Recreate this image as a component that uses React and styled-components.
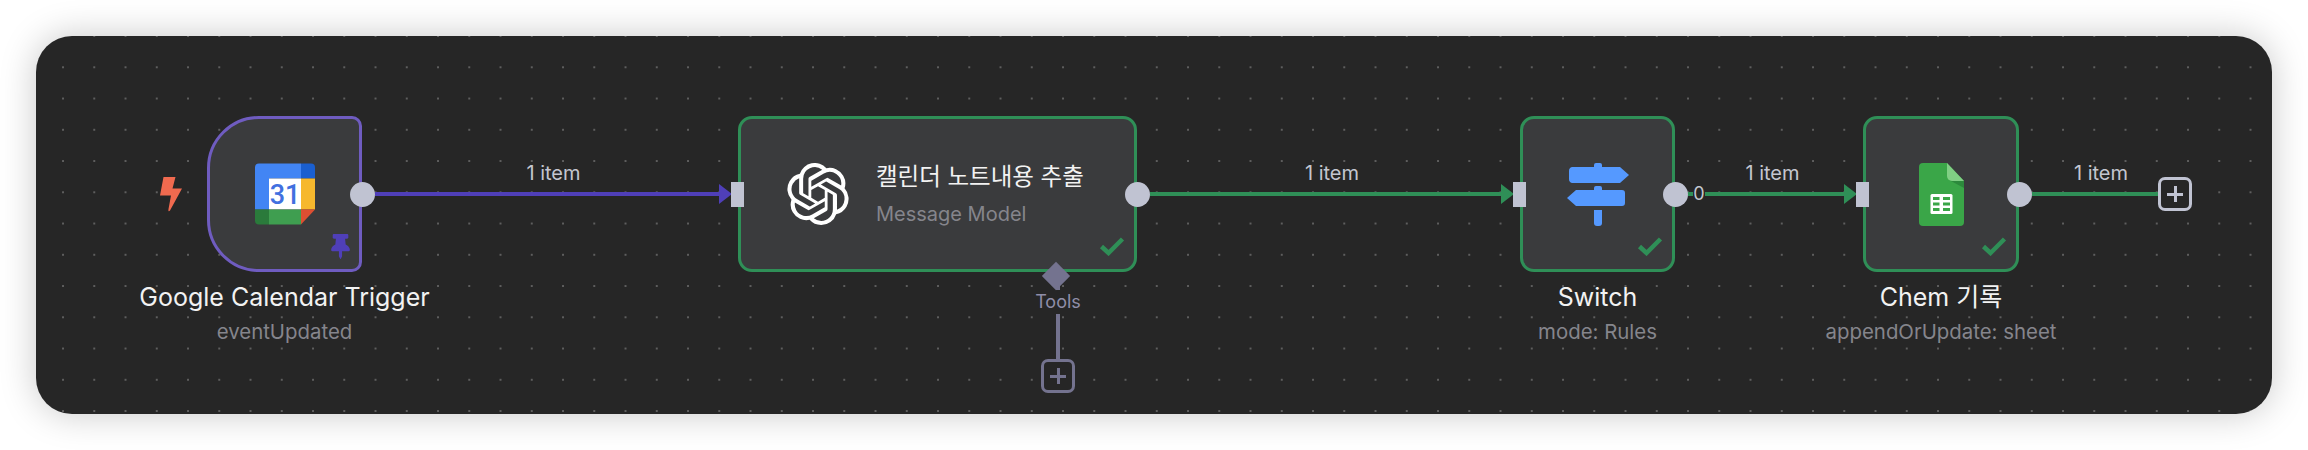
import React from 'react';
import styled, { createGlobalStyle } from 'styled-components';
import { SiOpenai } from 'react-icons/si';
import { FaThumbtack } from 'react-icons/fa';

const PURPLE = '#4f3fb8';
const GREEN = '#2f8f57';
const PORT = '#c0c3d2';
const TOOL = '#74738f';

const CalendarIcon = () => (
  <svg width="60" height="62" viewBox="0 0 60 61">
    <path d="M4 0H46V15H14V46H0V4A4 4 0 0 1 4 0Z" fill="#4285f4" />
    <path d="M46 0H56A4 4 0 0 1 60 4V15H46Z" fill="#1a5fd0" />
    <rect x="46" y="15" width="14" height="31" fill="#f6b82e" />
    <rect x="14" y="15" width="32" height="31" fill="#fff" />
    <rect x="14" y="46" width="32" height="15" fill="#3f9e50" />
    <path d="M0 46H14V61H4A4 4 0 0 1 0 57Z" fill="#2a7a3b" />
    <path d="M46 46H60L46 61Z" fill="#dd4f32" />
    <text x="30" y="40.500" textAnchor="middle" fontFamily="Roboto, sans-serif" fontWeight="500" fontSize="27" fill="#4170e0">31</text>
  </svg>
);

const SwitchIcon = () => (
  <svg width="62" height="63" viewBox="0 0 62 63" fill="#5599ff">
    <path d="M27 4V2A2 2 0 0 1 29 0H33A2 2 0 0 1 35 2V4H53L62 12L53 20H5A4 4 0 0 1 2 16V8A4 4 0 0 1 5 4Z" />
    <path d="M27 27V25A2 2 0 0 1 29 23H33A2 2 0 0 1 35 25V27H55A3 3 0 0 1 58 30V40A3 3 0 0 1 55 43H9L0 35L9 27Z" />
    <path d="M27 47H35V60A3 3 0 0 1 32 63H30A3 3 0 0 1 27 60Z" />
  </svg>
);

const SheetsIcon = () => (
  <svg width="45" height="63" viewBox="0 0 45 63">
    <path d="M4 0H28L45 18V59A4 4 0 0 1 41 63H4A4 4 0 0 1 0 59V4A4 4 0 0 1 4 0Z" fill="#3aa648" />
    <path d="M28 0L45 18H33A5 5 0 0 1 28 13Z" fill="#80cf84" />
    <path d="M32 18H45V25Z" fill="#2c8a3c" />
    <rect x="11.500" y="31" width="22" height="20" rx="1.500" fill="#fff" />
    <path d="M14 35.500H20.500M24 35.500H31M14 41H20.500M24 41H31M14 46.500H20.500M24 46.500H31" stroke="#3aa648" strokeWidth="3" />
  </svg>
);

const Check = () => (
  <svg width="26" height="19" viewBox="0 0 26 19">
    <path d="M2.500 9.500L9.500 16L23.500 2" fill="none" stroke={GREEN} strokeWidth="4.500" />
  </svg>
);

const Bolt = () => (
  <svg width="22" height="35" viewBox="0 0 22 35">
    <path d="M3.500 0H15.500L12.500 11.500H22L10 33.500Q8 35.500 8.500 32L11 18.500H0Z" fill="#f06a4f" />
  </svg>
);

const App = () => {
  return (
    <Page>
      <GlobalStyle />
      <Canvas>
        <BoltSlot><Bolt /></BoltSlot>

        <Node $w={155}>
          <Box $trigger>
            <CalendarIcon />
            <PinMark><FaThumbtack size={25} color={PURPLE} /></PinMark>
            <OutPort />
          </Box>
          <Title>Google Calendar Trigger</Title>
          <Sub>eventUpdated</Sub>
        </Node>

        <Edge $w={376}>
          <EdgeLabel>1 item</EdgeLabel>
          <Track>
            <Line $color={PURPLE} />
            <Arrow $color={PURPLE} />
          </Track>
        </Edge>

        <Node $w={399}>
          <WideBox>
            <SiOpenai size={62} color="#fff" />
            <WideText>
              <WideTitle>캘린더 노트내용 추출</WideTitle>
              <WideSub>Message Model</WideSub>
            </WideText>
            <InPort />
            <OutPort />
            <CheckMark><Check /></CheckMark>
            <Diamond />
          </WideBox>
          <Branch>
            <Stem $h={18} />
            <ToolsLabel>Tools</ToolsLabel>
            <Stem $h={45} />
            <PlusButton $color={TOOL} />
          </Branch>
        </Node>

        <Edge $w={383}>
          <EdgeLabel>1 item</EdgeLabel>
          <Track>
            <Line $color={GREEN} />
            <Arrow $color={GREEN} />
          </Track>
        </Edge>

        <Node $w={155}>
          <Box>
            <SwitchIcon />
            <InPort />
            <OutPort />
            <CheckMark><Check /></CheckMark>
          </Box>
          <Title>Switch</Title>
          <Sub>mode: Rules</Sub>
        </Node>

        <Edge $w={188}>
          <EdgeLabel>1 item</EdgeLabel>
          <Track>
            <Line $color={GREEN} $w={5} />
            <Zero>0</Zero>
            <Line $color={GREEN} />
            <Arrow $color={GREEN} />
          </Track>
        </Edge>

        <Node $w={156}>
          <Box>
            <SheetsIcon />
            <InPort />
            <OutPort />
            <CheckMark><Check /></CheckMark>
          </Box>
          <Title>Chem 기록</Title>
          <Sub>appendOrUpdate: sheet</Sub>
        </Node>

        <Edge $w={139} $open>
          <EdgeLabel $shift={12}>1 item</EdgeLabel>
          <Track>
            <Line $color={GREEN} />
          </Track>
        </Edge>

        <PlusSlot>
          <PlusButton $color={PORT} />
        </PlusSlot>
      </Canvas>
    </Page>
  );
};

export default App;

const GlobalStyle = createGlobalStyle`
  html, body {
    margin: 0;
    padding: 0;
    background: #fff;
    font-family: Inter, "Noto Sans CJK KR", sans-serif;
  }
`;
const Page = styled.div`
  width: 2308px;
  height: 450px;
  padding: 36px;
  box-sizing: border-box;
  overflow: hidden;
`;
const Canvas = styled.div`
  width: 2236px;
  height: 378px;
  box-sizing: border-box;
  padding: 80px 0 0 124px;
  display: flex;
  align-items: flex-start;
  border-radius: 36px;
  background-color: #262626;
  background-image: radial-gradient(circle, #5e5e5e 1px, transparent 1.4px);
  background-size: 31.25px 31.25px;
  background-position: 11.4px -15.6px;
  box-shadow: 0 0 36px rgba(0, 0, 0, 0.22);
`;
const BoltSlot = styled.div`
  flex: none;
  height: 156px;
  margin-right: 25px;
  display: flex;
  align-items: center;
`;
const PlusSlot = styled.div`
  flex: none;
  height: 156px;
  display: flex;
  align-items: center;
`;
const Node = styled.div`
  flex: none;
  width: ${(p) => p.$w}px;
  display: flex;
  flex-direction: column;
  align-items: center;
`;
const Box = styled.div`
  position: relative;
  width: 100%;
  height: 156px;
  box-sizing: border-box;
  display: flex;
  align-items: center;
  justify-content: center;
  background: #3a3b3d;
  border: 3px solid ${(p) => (p.$trigger ? '#6f5cc0' : GREEN)};
  border-radius: ${(p) => (p.$trigger ? '52px 10px 10px 52px' : '14px')};
`;
const WideBox = styled(Box)`
  justify-content: flex-start;
  padding-left: 46px;
  gap: 27px;
`;
const WideText = styled.div`
  display: flex;
  flex-direction: column;
  gap: 7px;
`;
const WideTitle = styled.div`
  font-size: 23.5px;
  line-height: 32px;
  color: #f2f2f2;
  white-space: nowrap;
`;
const WideSub = styled.div`
  font-size: 20px;
  line-height: 28px;
  color: #85858c;
  white-space: nowrap;
`;
const Title = styled.div`
  margin-top: 11px;
  font-size: 25px;
  line-height: 28px;
  color: #f2f2f2;
  white-space: nowrap;
`;
const Sub = styled.div`
  margin-top: 9px;
  font-size: 20.4px;
  line-height: 24px;
  color: #85858c;
  white-space: nowrap;
`;
const OutPort = styled.span`
  position: absolute;
  right: -16px;
  top: 50%;
  width: 25px;
  height: 25px;
  margin-top: -12.5px;
  border-radius: 50%;
  background: ${PORT};
`;
const InPort = styled.span`
  position: absolute;
  left: -10px;
  top: 50%;
  width: 12.5px;
  height: 25px;
  margin-top: -12.5px;
  background: ${PORT};
`;
const CheckMark = styled.span`
  position: absolute;
  right: 9px;
  bottom: 13px;
  display: flex;
`;
const PinMark = styled.span`
  position: absolute;
  right: 6px;
  bottom: 10px;
  display: flex;
`;
const Diamond = styled.span`
  position: absolute;
  left: 305px;
  bottom: -17px;
  width: 20px;
  height: 20px;
  background: ${TOOL};
  transform: rotate(45deg);
`;
const Edge = styled.div`
  flex: none;
  width: ${(p) => p.$w}px;
  height: 156px;
  box-sizing: border-box;
  padding: 46px ${(p) => (p.$open ? 0 : 6)}px 0 13px;
  display: flex;
  flex-direction: column;
  align-items: stretch;
`;
const EdgeLabel = styled.div`
  padding-left: ${(p) => p.$shift || 0}px;
  font-size: 20px;
  line-height: 22px;
  text-align: center;
  color: #c4c6d0;
  white-space: nowrap;
`;
const Track = styled.div`
  height: 20px;
  display: flex;
  align-items: center;
`;
const Line = styled.div`
  flex: ${(p) => (p.$w ? `none` : 1)};
  width: ${(p) => (p.$w ? `${p.$w}px` : 'auto')};
  height: 4px;
  background: ${(p) => p.$color};
`;
const Arrow = styled.div`
  flex: none;
  width: 0;
  height: 0;
  border-left: 13px solid ${(p) => p.$color};
  border-top: 10px solid transparent;
  border-bottom: 10px solid transparent;
`;
const Zero = styled.span`
  flex: none;
  width: 12px;
  font-size: 18px;
  line-height: 20px;
  text-align: center;
  color: #c4c6d0;
`;
const Branch = styled.div`
  align-self: flex-end;
  width: 60px;
  margin-right: 49px;
  display: flex;
  flex-direction: column;
  align-items: center;
`;
const Stem = styled.div`
  width: 4px;
  height: ${(p) => p.$h}px;
  background: ${TOOL};
`;
const ToolsLabel = styled.div`
  font-size: 18px;
  line-height: 24px;
  color: #8f8ea8;
`;
const PlusButton = styled.div`
  flex: none;
  width: 34px;
  height: 34px;
  box-sizing: border-box;
  border: 3px solid ${(p) => p.$color};
  border-radius: 7px;
  background: linear-gradient(${(p) => p.$color}, ${(p) => p.$color}) center / 16px 3px no-repeat,
    linear-gradient(${(p) => p.$color}, ${(p) => p.$color}) center / 3px 16px no-repeat,
    #262626;
`;
